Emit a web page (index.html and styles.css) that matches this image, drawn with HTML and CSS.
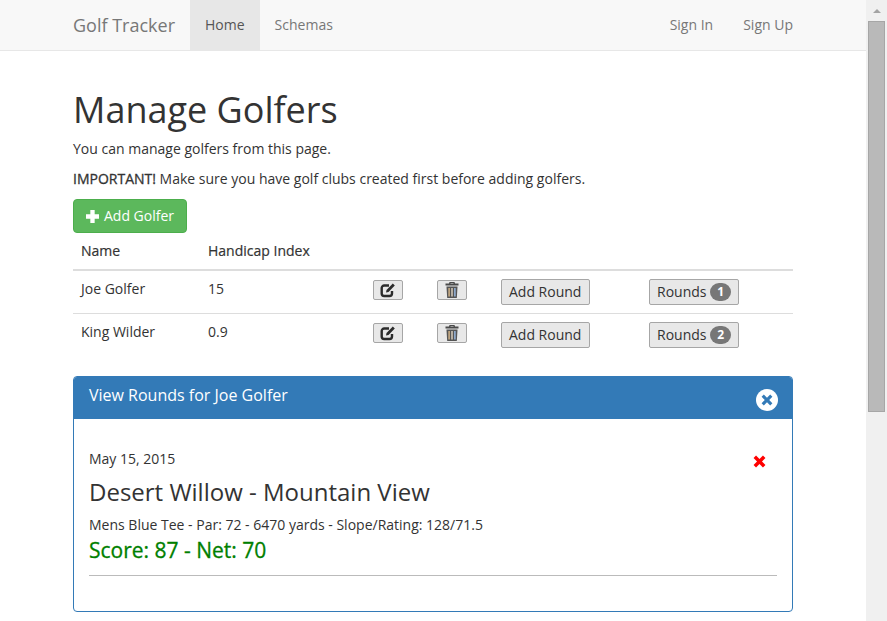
FILE: index.html
```html
<!DOCTYPE html>
<html lang="en">
<head>
<meta charset="utf-8">
<title>Golf Tracker</title>
<link rel="stylesheet" href="styles.css">
</head>
<body>
<div class="page">
  <div class="viewport">
    <nav class="navbar">
      <div class="container nav-inner">
        <a class="brand">Golf Tracker</a>
        <ul class="nav">
          <li class="nav-item active">Home</li>
          <li class="nav-item">Schemas</li>
        </ul>
        <ul class="nav nav-right">
          <li class="nav-item">Sign In</li>
          <li class="nav-item">Sign Up</li>
        </ul>
      </div>
    </nav>
    <main class="container">
      <h1 class="title">Manage Golfers</h1>
      <p class="text">You can manage golfers from this page.</p>
      <p class="text"><strong class="strong">IMPORTANT!</strong> Make sure you have golf clubs created first before adding golfers.</p>
      <button class="btn-success">
        <svg class="icon-plus" viewBox="1 1 12 12"><path d="M5 1h4v4h4v4H9v4H5V9H1V5h4z" fill="#fff"/></svg>
        <span>Add Golfer</span>
      </button>
      <table class="table">
        <thead>
          <tr>
            <th class="col-name">Name</th>
            <th class="col-hcp">Handicap Index</th>
            <th class="col-edit"></th>
            <th class="col-del"></th>
            <th class="col-add"></th>
            <th class="col-rounds"></th>
          </tr>
        </thead>
        <tbody>
          <tr>
            <td class="cell-text">Joe Golfer</td>
            <td class="cell-text">15</td>
            <td><button class="btn-xs"><svg class="icon" viewBox="0 0 16 16"><path d="M12 9v2.500a2.500 2.500 0 0 1-2.500 2.500H4.200a2.500 2.500 0 0 1-2.500-2.500V6a2.500 2.500 0 0 1 2.500-2.500H9" fill="none" stroke="#2b2b2b" stroke-width="2.400"/><path d="M6.500 8 12.800 1.500 14.800 3.500 8.500 10 6 10.500z" fill="#2b2b2b"/></svg></button></td>
            <td><button class="btn-xs"><svg class="icon" viewBox="0 0 16 16"><path d="M5.500 0h5l.5 1.500h3.500V3.500h-13V1.500H5zM6.500 1v.5h3V1z" fill="#4a4a4a" fill-rule="evenodd"/><path d="M2.500 4.500h11l-.7 11.500H3.200z" fill="#555"/><path d="M4.400 6v8.500h1.400V6z" fill="#d9b88a"/><path d="M7.300 6v8.500h1.400V6z" fill="#e2d6c4"/><path d="M10.200 6v8.500h1.400V6z" fill="#9dbde6"/></svg></button></td>
            <td><button class="btn-sm btn-add">Add Round</button></td>
            <td><button class="btn-sm">Rounds <span class="badge">1</span></button></td>
          </tr>
          <tr>
            <td class="cell-text">King Wilder</td>
            <td class="cell-text">0.9</td>
            <td><button class="btn-xs"><svg class="icon" viewBox="0 0 16 16"><path d="M12 9v2.500a2.500 2.500 0 0 1-2.500 2.500H4.200a2.500 2.500 0 0 1-2.500-2.500V6a2.500 2.500 0 0 1 2.500-2.500H9" fill="none" stroke="#2b2b2b" stroke-width="2.400"/><path d="M6.500 8 12.800 1.500 14.800 3.500 8.500 10 6 10.500z" fill="#2b2b2b"/></svg></button></td>
            <td><button class="btn-xs"><svg class="icon" viewBox="0 0 16 16"><path d="M5.500 0h5l.5 1.500h3.500V3.500h-13V1.500H5zM6.500 1v.5h3V1z" fill="#4a4a4a" fill-rule="evenodd"/><path d="M2.500 4.500h11l-.7 11.500H3.200z" fill="#555"/><path d="M4.400 6v8.500h1.400V6z" fill="#d9b88a"/><path d="M7.300 6v8.500h1.400V6z" fill="#e2d6c4"/><path d="M10.200 6v8.500h1.400V6z" fill="#9dbde6"/></svg></button></td>
            <td><button class="btn-sm btn-add">Add Round</button></td>
            <td><button class="btn-sm">Rounds <span class="badge">2</span></button></td>
          </tr>
        </tbody>
      </table>
      <section class="panel">
        <header class="panel-head">
          <h3 class="panel-title">View Rounds for Joe Golfer</h3>
          <svg class="icon-close" viewBox="0 0 22 22"><circle cx="11" cy="11" r="11" fill="#fff"/><path d="M7.800 5.600 11 8.800l3.200-3.200 2.200 2.200L13.200 11l3.200 3.200-2.200 2.200L11 13.200l-3.200 3.200-2.200-2.200L8.800 11 5.600 7.800z" fill="#337ab7"/></svg>
        </header>
        <div class="panel-body">
          <div class="round-top">
            <div class="round-date">May 15, 2015</div>
            <svg class="icon-remove" viewBox="0 0 12 12"><path d="M2.800.5 6 3.700 9.200.5l2.300 2.300L8.300 6l3.200 3.200-2.300 2.300L6 8.300l-3.200 3.200L.5 9.200 3.700 6 .5 2.800z" fill="#f00"/></svg>
          </div>
          <h3 class="course">Desert Willow - Mountain View</h3>
          <div class="tee">Mens Blue Tee - Par: 72 - 6470 yards - Slope/Rating: 128/71.5</div>
          <div class="score">Score: 87 - Net: 70</div>
          <hr class="rule">
        </div>
      </section>
    </main>
  </div>
  <div class="scrollbar">
    <div class="scroll-up"></div>
    <div class="scroll-thumb"></div>
  </div>
</div>
</body>
</html>
```

FILE: styles.css
```css
* { box-sizing: border-box; }
html, body { margin: 0; padding: 0; height: 100%; overflow: hidden; }
body { font-family: "Open Sans", sans-serif; font-size: 14px; line-height: 20px; color: #333; background: #fff; }
.page { display: flex; height: 621px; overflow: hidden; }
.viewport { flex: 1; min-width: 0; }
.container { width: 750px; margin: 0 auto; padding: 0 15px; }
.navbar { height: 51px; background: #f8f8f8; border-bottom: 1px solid #e7e7e7; }
.nav-inner { display: flex; }
.brand { font-size: 18px; line-height: 20px; padding: 15px 15px 15px 0; color: #777; }
.nav { display: flex; list-style: none; margin: 0; padding: 0; }
.nav-right { margin-left: auto; margin-right: -15px; }
.nav-item { padding: 15px; color: #777; }
.nav-item.active { background: #e7e7e7; color: #555; }
.title { font-size: 36px; font-weight: 400; line-height: 40px; margin: 39px 0 9px; color: #333; }
.text { margin: 0 0 10px; }
.strong { font-weight: 400; -webkit-text-stroke: 0.3px #333; }
.btn-success { display: flex; align-items: center; gap: 5px; width: 114px; height: 34px; padding: 0 12px; font: 14px/20px "Open Sans", sans-serif; color: #fff; white-space: nowrap; background: #5cb85c; border: 1px solid #4cae4c; border-radius: 4px; }
.icon-plus { width: 13px; height: 13px; flex: none; }
.table { width: 100%; border-collapse: collapse; table-layout: fixed; }
.table th { text-align: left; font-weight: 400; -webkit-text-stroke: 0.2px #333; height: 37px; padding: 0 8px; border-bottom: 2px solid #ddd; vertical-align: middle; }
.table td { height: 43px; padding: 8px; border-bottom: 1px solid #ddd; vertical-align: top; }
.table tbody tr:last-child td { border-bottom: 0; }
.col-name { width: 127px; }
.col-hcp { width: 165px; }
.col-edit { width: 64px; }
.col-del { width: 64px; }
.col-add { width: 148px; }
.cell-text { padding-top: 8px; }
.btn-xs { display: flex; align-items: center; justify-content: center; width: 30px; height: 20px; margin-top: 1px; padding: 0; background: #e8e8e8; border: 1px solid #a6a6a6; border-radius: 2px; }
.icon { width: 16px; height: 16px; }
.btn-sm { display: inline-flex; align-items: center; height: 26px; padding: 0 7px; margin-top: 0; font: 14px/20px "Open Sans", sans-serif; color: #333; background: #e8e8e8; border: 1px solid #a6a6a6; border-radius: 2px; white-space: pre; }
.btn-add { padding-right: 8px; }
.badge { display: inline-block; min-width: 21px; height: 18px; padding: 0 6px; font-size: 12px; line-height: 18px; font-weight: 700; color: #fff; background: #777; border-radius: 10px; text-align: center; }
.panel { margin-top: 19px; height: 236px; border: 1px solid #337ab7; border-radius: 4px; overflow: hidden; }
.panel-head { display: flex; align-items: flex-start; justify-content: space-between; height: 42px; padding: 9px 15px 0; background: #337ab7; color: #fff; }
.panel-title { margin: 0; font-size: 16px; font-weight: 400; line-height: 18px; color: #fff; }
.icon-close { width: 22px; height: 22px; margin: 3px -1px 0 0; }
.panel-body { padding: 30px 15px 15px; }
.round-top { display: flex; justify-content: space-between; align-items: flex-start; }
.round-date { line-height: 20px; }
.icon-remove { width: 13px; height: 13px; margin: 6px 11px 0 0; }
.course { margin: 10px 0 10px; font-size: 24px; font-weight: 400; line-height: 26px; color: #333; }
.tee { line-height: 20px; }
.score { font-size: 21px; font-weight: 400; -webkit-text-stroke: 0.3px #008000; line-height: 26px; color: #008000; margin-top: 2px; }
.rule { margin: 12px 0 0; border: 0; border-top: 1px solid #bbb; }
.scrollbar { width: 21px; background: #f0f0f0; padding-left: 2px; }
.scroll-up { position: relative; height: 21px; }
.scroll-up::after { content: ""; position: absolute; left: 5px; top: 9px; border-left: 4px solid transparent; border-right: 4px solid transparent; border-bottom: 4px solid #a3a3a3; }
.scroll-thumb { width: 17px; height: 391px; background: #b9b9b9; border: 1px solid #a6a6a6; }
```
